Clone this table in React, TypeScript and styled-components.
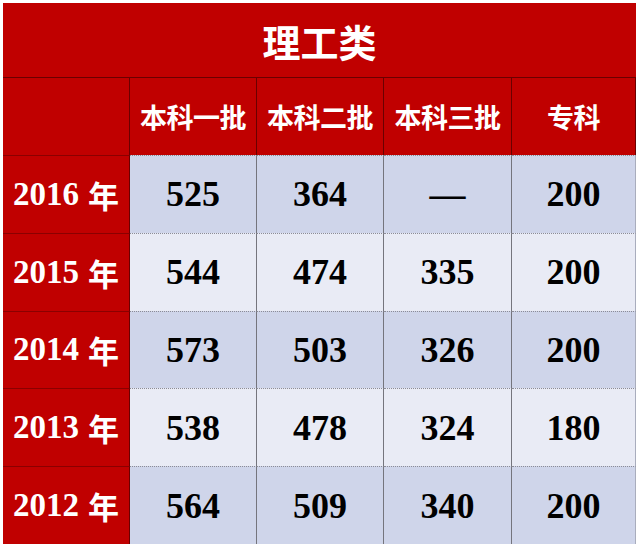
import styled, { createGlobalStyle } from "styled-components";

const GlobalStyle = createGlobalStyle`
    html, body {
        margin: 0;
        padding: 0;
        background: #ffffff;
    }
`;

const columns = ["本科一批", "本科二批", "本科三批", "专科"];

const rows = [
    { year: "2016", values: ["525", "364", "—", "200"] },
    { year: "2015", values: ["544", "474", "335", "200"] },
    { year: "2014", values: ["573", "503", "326", "200"] },
    { year: "2013", values: ["538", "478", "324", "180"] },
    { year: "2012", values: ["564", "509", "340", "200"] },
];

const App = () => {
    return (
        <Page>
            <GlobalStyle />
            <Table>
                <Title>理工类</Title>
                <Corner />
                {columns.map((c) => (
                    <HeadCell key={c}>{c}</HeadCell>
                ))}
                {rows.map((r, i) => (
                    <Row key={r.year}>
                        <YearCell>
                            {r.year}
                            <span className="unit">年</span>
                        </YearCell>
                        {r.values.map((v, j) => (
                            <DataCell key={j} $odd={i % 2 === 1} $last={j === 3}>
                                {v}
                            </DataCell>
                        ))}
                    </Row>
                ))}
            </Table>
        </Page>
    );
};

export default App;

const Page = styled.div`
    padding: 3px 0 0 3px;
    width: 640px;
    height: 549px;
    box-sizing: border-box;
`;
const Table = styled.div`
    display: grid;
    grid-template-columns: 127px 127px 127px 128px 124px;
    grid-template-rows: 75px 77px repeat(5, 77.8px);
    width: 633px;
    background: #c00000;
`;
const Title = styled.div`
    grid-column: 1 / -1;
    display: flex;
    align-items: center;
    justify-content: center;
    color: #ffffff;
    font-family: "Noto Sans CJK SC", sans-serif;
    font-weight: 700;
    font-size: 38px;
    border-bottom: 1px solid #6a0000;
    box-sizing: border-box;
`;
const Corner = styled.div`
    border-right: 1px solid #6a0000;
`;
const HeadCell = styled.div`
    display: flex;
    align-items: center;
    justify-content: center;
    color: #ffffff;
    font-family: "Noto Sans CJK SC", sans-serif;
    font-weight: 700;
    font-size: 27px;
    letter-spacing: -0.5px;
    border-right: 1px solid #6a0000;
    box-sizing: border-box;
    &:last-child {
        border-right: none;
    }
`;
const Row = styled.div`
    display: contents;
`;
const YearCell = styled.div`
    display: flex;
    align-items: center;
    justify-content: center;
    color: #ffffff;
    font-family: "Liberation Serif", serif;
    font-weight: 700;
    font-size: 33px;
    border-top: 1px solid #8a0000;
    border-right: 1px solid #6a0000;
    box-sizing: border-box;
    .unit {
        margin-left: 9px;
        font-family: "Noto Sans CJK SC", sans-serif;
        font-size: 31px;
    }
`;
const DataCell = styled.div<{ $odd: boolean; $last: boolean }>`
    display: flex;
    align-items: center;
    justify-content: center;
    background: ${(p) => (p.$odd ? "#e9ebf5" : "#cfd5ea")};
    color: #000000;
    font-family: "Liberation Serif", serif;
    font-weight: 700;
    font-size: 36px;
    border-top: 1px dotted #8c8c96;
    border-right: ${(p) => (p.$last ? "1px solid #a9adbd" : "1px solid #75757d")};
    box-sizing: border-box;
`;
